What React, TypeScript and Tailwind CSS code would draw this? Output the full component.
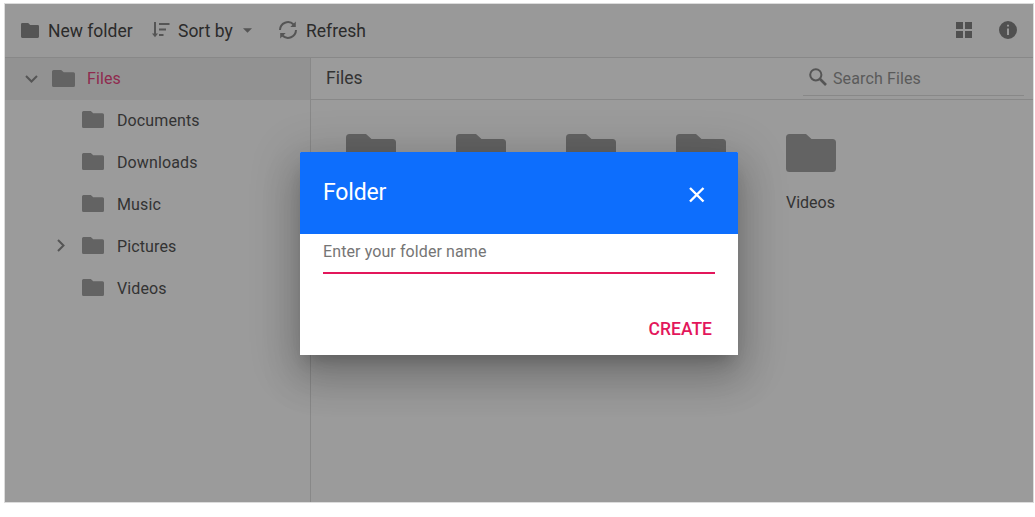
import React from 'react';

function FolderIcon({ className }: { className: string }) {
  return (
    <svg viewBox="0 0 50 38" preserveAspectRatio="none" className={className} fill="currentColor">
      <path d="M3.5 0H20L25.5 5H46.5A3.5 3.5 0 0 1 50 8.5V34.5A3.5 3.5 0 0 1 46.5 38H3.5A3.5 3.5 0 0 1 0 34.5V3.5A3.5 3.5 0 0 1 3.5 0Z" />
    </svg>
  );
}

function SortIcon() {
  return (
    <svg viewBox="0 0 18 18" className="mb-[2px] ml-[19px] h-[18px] w-[18px] shrink-0" fill="none" stroke="currentColor" strokeWidth="2">
      <path d="M3 1V14" />
      <path d="M0 12.5H6L3 16.2Z" fill="currentColor" stroke="none" />
      <path d="M7 3H17.5M7 8.5H14M7 14H11.5" />
    </svg>
  );
}

function RefreshIcon() {
  return (
    <svg viewBox="0 0 18 18" className="mb-[2px] ml-[27px] h-[18px] w-[18px] shrink-0" fill="none" stroke="currentColor" strokeWidth="2">
      <path d="M1 9A8 8 0 0 1 14.6 3.5M17 9A8 8 0 0 1 3.4 14.5" />
      <path d="M16.8 0.5V6H11.3ZM1.2 17.5V12H6.7Z" fill="currentColor" stroke="none" />
    </svg>
  );
}

const children = ['Documents', 'Downloads', 'Music', 'Pictures', 'Videos'];

function Toolbar() {
  return (
    <header className="flex h-[54px] shrink-0 items-center border-b border-[#888888] bg-[#999999] pl-4 text-[17.5px] text-[#2b2b2b]">
      <FolderIcon className="h-[15px] w-[18px] shrink-0 text-[#555555]" />
      <span className="ml-[9px] mt-[2px] w-[85px] whitespace-nowrap">New folder</span>
      <span className="flex text-[#555555]"><SortIcon /></span>
      <span className="ml-2 mt-[2px] w-[55px] whitespace-nowrap">Sort by</span>
      <svg viewBox="0 0 10 5" className="ml-[10px] h-[5px] w-[9px]" fill="#555555"><path d="M0 0H10L5 5Z" /></svg>
      <span className="flex text-[#555555]"><RefreshIcon /></span>
      <span className="ml-[9px] mt-[2px]">Refresh</span>
      <div className="ml-auto mr-4 flex items-center gap-[27px] text-[#505050]">
        <svg viewBox="0 0 16 16" className="mb-[2px] h-4 w-4" fill="currentColor">
          <path d="M0 0H7V7H0ZM9 0H16V7H9ZM0 9H7V16H0ZM9 9H16V16H9Z" />
        </svg>
        <svg viewBox="0 0 18 18" className="mb-[2px] h-[18px] w-[18px]" fill="currentColor" fillRule="evenodd">
          <path d="M9 0A9 9 0 1 1 9 18A9 9 0 1 1 9 0ZM8 3.7V5.6H10V3.7ZM8 7.5V14H10V7.5Z" />
        </svg>
      </div>
    </header>
  );
}

function Tree() {
  return (
    <nav className="w-[306px] shrink-0 border-r border-[#888888] text-[16px] tracking-[0.12px] text-[#333333]">
      <div className="flex h-[42px] items-center bg-[#929292] pl-5 text-[#8f2a4e]">
        <svg viewBox="0 0 13 8" className="h-2 w-[13px]" fill="none" stroke="#555555" strokeWidth="2"><path d="M1 1L6.5 6.5L12 1" /></svg>
        <FolderIcon className="mb-[2px] ml-[14px] h-[17px] w-[23px] text-[#636363]" />
        <span className="ml-3">Files</span>
      </div>
      {children.map((name) => (
        <div key={name} className="flex h-[42px] items-center pl-[52px]">
          <span className="mb-[3px] w-[25px]">
            {name === 'Pictures' && (
              <svg viewBox="0 0 8 13" className="h-[13px] w-2" fill="none" stroke="#555555" strokeWidth="2"><path d="M1 1L6.5 6.5L1 12" /></svg>
            )}
          </span>
          <FolderIcon className="mb-[3px] h-[17px] w-[22px] text-[#636363]" />
          <span className="ml-[13px]">{name}</span>
        </div>
      ))}
    </nav>
  );
}

function Content() {
  return (
    <main className="flex grow flex-col">
      <div className="flex h-[42px] shrink-0 items-start border-b border-[#888888] pl-[15px] pr-[9px]">
        <span className="mt-[6px] text-[17.5px] leading-7 text-[#333333]">Files</span>
        <div className="ml-auto flex h-[38px] w-[221px] items-center border-b border-[#888888] pl-[6px]">
          <svg viewBox="0 0 18 18" className="mt-[1px] h-[18px] w-[18px]" fill="none" stroke="#555555" strokeWidth="2">
            <circle cx="6.8" cy="6.8" r="5.6" />
            <path d="M11 11L17 17" strokeWidth="2.6" />
          </svg>
          <span className="ml-[6px] mt-[4px] text-[16px] tracking-[0.12px] text-[#5a5a5a]">Search Files</span>
        </div>
      </div>
      <div className="flex pl-[35px] pt-[34px]">
        {children.map((name) => (
          <div key={name} className="w-[110px] shrink-0">
            <FolderIcon className="h-[38px] w-[50px] text-[#636363]" />
            {name === 'Videos' && <div className="mt-[19px] text-[16px] leading-6 text-[#333333]">{name}</div>}
          </div>
        ))}
      </div>
    </main>
  );
}

function NewFolderDialog() {
  return (
    <section
      role="dialog"
      className="absolute left-[300px] top-[152px] flex h-[203px] w-[438px] flex-col overflow-hidden rounded-t-[1px] bg-white shadow-[0_11px_15px_-7px_rgba(0,0,0,0.2),0_24px_38px_3px_rgba(0,0,0,0.14),0_9px_46px_8px_rgba(0,0,0,0.16)]"
    >
      <div className="flex h-[82px] shrink-0 items-center justify-between bg-[#0d6efd] pl-[23px] pr-[33px] text-white">
        <h2 className="text-[23px] leading-8 tracking-[-0.15px]">Folder</h2>
        <svg viewBox="0 0 16 16" className="mt-[3px] h-4 w-4" fill="none" stroke="currentColor" strokeWidth="2.4"><path d="M1 1L14.5 14.5M14.5 1L1 14.5" /></svg>
      </div>
      <div className="mx-[23px] h-10 border-b-2 border-[#e3165b] pt-[6px] text-[16px] leading-6 tracking-[0.1px] text-[#757575]">
        Enter your folder name
      </div>
      <button className="mr-[26px] mt-[43px] self-end text-[17.5px] font-medium leading-6 text-[#e3165b]">CREATE</button>
    </section>
  );
}

export default function App() {
  return (
    <div className="relative h-[517px] w-[1035px] overflow-hidden bg-white pl-1 pt-[3px] font-['Roboto',sans-serif]">
      <div className="flex h-[500px] w-[1030px] flex-col border border-[#dcdcdc] bg-[#9b9b9b]">
        <Toolbar />
        <div className="flex grow">
          <Tree />
          <Content />
        </div>
      </div>
      <NewFolderDialog />
    </div>
  );
}
